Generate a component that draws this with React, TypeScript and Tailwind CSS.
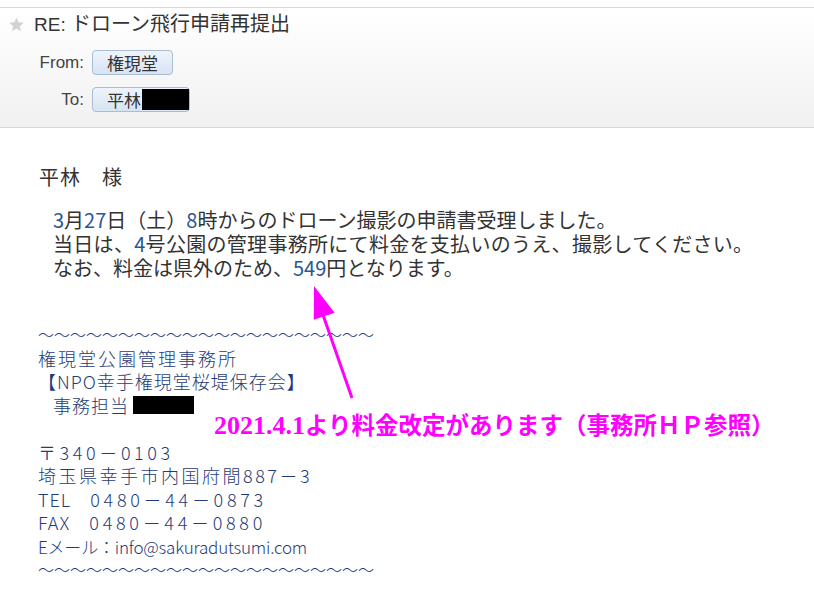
import React from "react";

const jp = { fontFamily: '"Noto Sans CJK JP", "Noto Sans", sans-serif' };

export default function App() {
  const blue = "text-[#2b5797]";
  return (
    <div className="relative w-[814px] h-[604px] overflow-hidden bg-white" style={jp}>
      {/* header */}
      <div className="mt-[7px] h-[121px] border-t border-b border-[#d8d8d8] bg-gradient-to-b from-white to-[#f1f1f1] pt-[4px]">
        <div className="flex items-center h-[24px]">
          <svg width="17" height="17" viewBox="0 0 24 24" className="ml-[8px] mr-[9px]">
            <path d="M12 2l2.9 6.9 7.4.6-5.6 4.9 1.7 7.3L12 17.8 5.6 21.7l1.7-7.3L1.7 9.5l7.4-.6z" fill="#d2d2d2" />
          </svg>
          <span className="text-[20px] leading-[24px] text-[#333]">
            <span className="text-[19px]" style={{ fontFamily: '"Liberation Sans", Arial, sans-serif' }}>RE: </span>ドローン飛行申請再提出
          </span>
        </div>
        <div className="mt-[14px] flex items-center">
          <div className="w-[84px] text-right text-[17px] text-[#444]" style={{ fontFamily: '"Liberation Sans", Arial, sans-serif' }}>From:</div>
          <div className="ml-[8px] h-[25px] w-[81px] rounded-[4px] border border-[#a9bdd6] bg-gradient-to-b from-[#eef4fb] to-[#d8e4f3] flex items-center pl-[14px] text-[17px] text-[#333]">
            権現堂
          </div>
        </div>
        <div className="mt-[11px] flex items-center">
          <div className="w-[84px] text-right text-[17px] text-[#444]" style={{ fontFamily: '"Liberation Sans", Arial, sans-serif' }}>To:</div>
          <div className="ml-[8px] h-[25px] w-[98px] rounded-[4px] border border-[#a9bdd6] bg-gradient-to-b from-[#eef4fb] to-[#d8e4f3] flex items-center pl-[14px] text-[17px] text-[#333]">
            平林<span className="ml-[1px] inline-block h-[21px] w-[47px] bg-black" />
          </div>
        </div>
      </div>

      {/* body */}
      <div className="pl-[39px] pt-[37px] text-[20px] leading-[24px] text-[#333]">
        <div className="tracking-[1px]">平林　様</div>
        <div className="mt-[19px] ml-[14px]">
          <div>
            <span className={blue}>3</span>月<span className={blue}>27</span>日（土）<span className={blue}>8</span>時からのドローン撮影の申請書受理しました。
          </div>
          <div className="tracking-[0.3px]">
            当日は、<span className={blue}>4</span>号公園の管理事務所にて料金を支払いのうえ、撮影してください。
          </div>
          <div>
            なお、料金は県外のため、<span className={blue}>549</span>円となります。
          </div>
        </div>
      </div>

      {/* signature */}
      <div className="mt-[43px] pl-[38px] text-[18px] leading-[23.5px] text-[#1f3c78] font-light">
        <div className="text-[16px] whitespace-nowrap">～～～～～～～～～～～～～～～～～～～～～</div>
        <div className="tracking-[2px]">権現堂公園管理事務所</div>
        <div className="tracking-[1px] whitespace-nowrap">【NPO幸手権現堂桜堤保存会】</div>
        <div className="ml-[15px] flex items-center tracking-[1px]">
          事務担当<span className="ml-[4px] inline-block h-[18px] w-[61px] bg-black" />
        </div>
        <div className="h-[23.5px]" />
        <div className="tracking-[3.6px]">〒340－0103</div>
        <div className="tracking-[2.5px]">埼玉県幸手市内国府間887－3</div>
        <div className="whitespace-pre">
          <span className="tracking-[1px]">TEL　</span>
          <span className="tracking-[3.7px]">0480－44－0873</span>
        </div>
        <div className="whitespace-pre">
          <span className="tracking-[1px]">FAX　</span>
          <span className="tracking-[3.7px]">0480－44－0880</span>
        </div>
        <div className="text-[17px] tracking-[-0.2px]">Eメール：info@sakuradutsumi.com</div>
        <div className="text-[16px] whitespace-nowrap">～～～～～～～～～～～～～～～～～～～～～</div>
      </div>

      {/* annotation overlay */}
      <svg className="absolute left-0 top-0" width="814" height="604" viewBox="0 0 814 604">
        <line x1="352" y1="398" x2="322" y2="312" stroke="#ff00ff" strokeWidth="3" />
        <polygon points="314,286 313.8,319.8 334.6,312.8" fill="#ff00ff" />
      </svg>
      <div className="absolute left-[214px] top-[408px] text-[23.5px] leading-[32px] font-bold text-[#ff00ff] whitespace-nowrap">
        <span className="text-[26px]" style={{ fontFamily: '"Liberation Serif", "Times New Roman", serif' }}>2021.4.1</span>より料金改定があります（事務所ＨＰ参照）
      </div>
    </div>
  );
}
